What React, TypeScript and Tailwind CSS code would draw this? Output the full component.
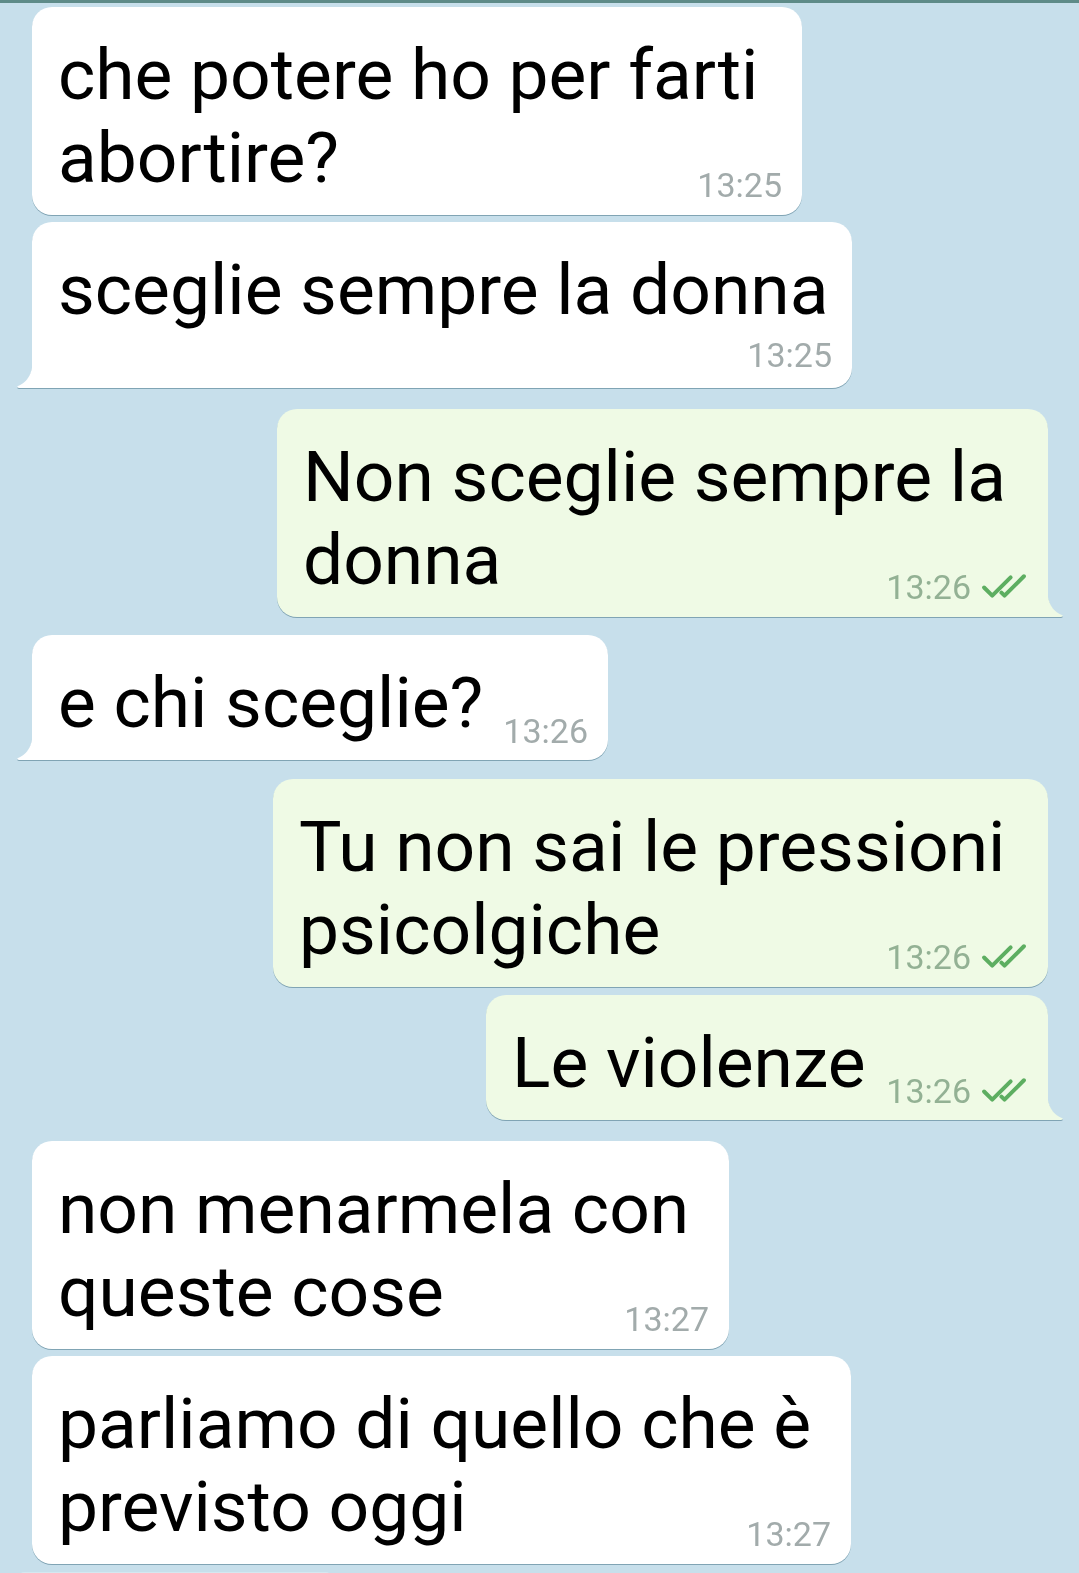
import React from "react";

type Msg = {
  lines: string[];
  time: string;
  out?: boolean;
  tail?: boolean;
  mode: "stack" | "inline" | "below";
  width: string;
  gap: string;
};

const messages: Msg[] = [
  { lines: ["che potere ho per farti", "abortire?"], time: "13:25", mode: "stack", width: "w-[770px]", gap: "mt-[4px]" },
  { lines: ["sceglie sempre la donna"], time: "13:25", mode: "below", tail: true, width: "w-[820px]", gap: "mt-[7px]" },
  { lines: ["Non sceglie sempre la", "donna"], time: "13:26", out: true, tail: true, mode: "stack", width: "w-[771px]", gap: "mt-[21px]" },
  { lines: ["e chi sceglie?"], time: "13:26", tail: true, mode: "inline", width: "w-[576px]", gap: "mt-[18px]" },
  { lines: ["Tu non sai le pressioni", "psicolgiche"], time: "13:26", out: true, mode: "stack", width: "w-[775px]", gap: "mt-[19px]" },
  { lines: ["Le violenze"], time: "13:26", out: true, tail: true, mode: "inline", width: "w-[562px]", gap: "mt-[8px]" },
  { lines: ["non menarmela con", "queste cose"], time: "13:27", mode: "stack", width: "w-[697px]", gap: "mt-[21px]" },
  { lines: ["parliamo di quello che è", "previsto oggi"], time: "13:27", mode: "stack", width: "w-[819px]", gap: "mt-[7px]" },
];

function Checks() {
  return (
    <svg width="47" height="27" viewBox="0 0 46 26" fill="none" className="ml-[10px] mb-[4px]">
      <path d="M3 14 L11 22 L29 4" stroke="#5dae61" strokeWidth="3.9" strokeLinecap="round" strokeLinejoin="round" />
      <path d="M20 19 L23 22 L42 3" stroke="#5dae61" strokeWidth="3.9" strokeLinecap="round" strokeLinejoin="round" />
    </svg>
  );
}

function Time({ m }: { m: Msg }) {
  return (
    <div className="flex items-end shrink-0">
      <span className={`text-[34px] leading-[33px] ${m.out ? "text-[#93b194]" : "text-[#a2abab]"}`}>{m.time}</span>
      {m.out && <Checks />}
    </div>
  );
}

function Tail({ out }: { out?: boolean }) {
  const fill = out ? "#effae5" : "#ffffff";
  if (out) {
    return (
      <svg width="18" height="36" viewBox="0 0 18 36" className="absolute bottom-0 right-[-16px]">
        <path d="M0 0 C1 22 6 30 16 34 Q18 35.5 15 36 L0 36 Z" fill={fill} />
      </svg>
    );
  }
  return (
    <svg width="18" height="36" viewBox="0 0 18 36" className="absolute bottom-0 left-[-16px]">
      <path d="M18 0 C17 22 12 30 2 34 Q0 35.5 3 36 L18 36 Z" fill={fill} />
    </svg>
  );
}

function Bubble({ m }: { m: Msg }) {
  const corner = m.tail ? (m.out ? "rounded-[20px] rounded-br-none" : "rounded-[20px] rounded-bl-none") : "rounded-[20px]";
  return (
    <div className={`flex ${m.out ? "justify-end pr-[31px]" : "pl-[32px]"} ${m.gap}`}>
      <div className={`relative ${m.width} drop-shadow-[0_1.5px_0.6px_rgba(70,115,135,0.55)]`}>
        <div className={`${corner} ${m.out ? "bg-[#effae5]" : "bg-white"} pl-[26px] pr-[20px] pt-[26px] pb-[16px] text-black`}>
          {m.mode === "stack" && (
            <>
              <div className="text-[71.3px] leading-[83px] whitespace-nowrap">{m.lines[0]}</div>
              <div className="flex items-end justify-between">
                <div className="text-[71.3px] leading-[83px] whitespace-nowrap">{m.lines[1]}</div>
                <div className="-mb-[3px]">
                  <Time m={m} />
                </div>
              </div>
            </>
          )}
          {m.mode === "below" && (
            <>
              <div className="text-[71.3px] leading-[83px] whitespace-nowrap">{m.lines[0]}</div>
              <div className="flex justify-end mt-[8px]">
                <Time m={m} />
              </div>
            </>
          )}
          {m.mode === "inline" && (
            <div className="flex items-end justify-between">
              <div className="text-[71.3px] leading-[83px] whitespace-nowrap">{m.lines[0]}</div>
              <div className="-mb-[4px]">
                <Time m={m} />
              </div>
            </div>
          )}
        </div>
        {m.tail && <Tail out={m.out} />}
      </div>
    </div>
  );
}

export default function App() {
  return (
    <div className="h-[1573px] w-[1079px] overflow-hidden bg-[#c7dfeb] font-['Roboto',sans-serif]">
      <div className="h-[3px] bg-[#5e8b88]" />
      {messages.map((m, i) => (
        <Bubble key={i} m={m} />
      ))}
      <div className="ml-[20px] mt-[8px] h-[4px] w-[310px] rounded-t-[6px] bg-[#d4e8f0]" />
    </div>
  );
}
